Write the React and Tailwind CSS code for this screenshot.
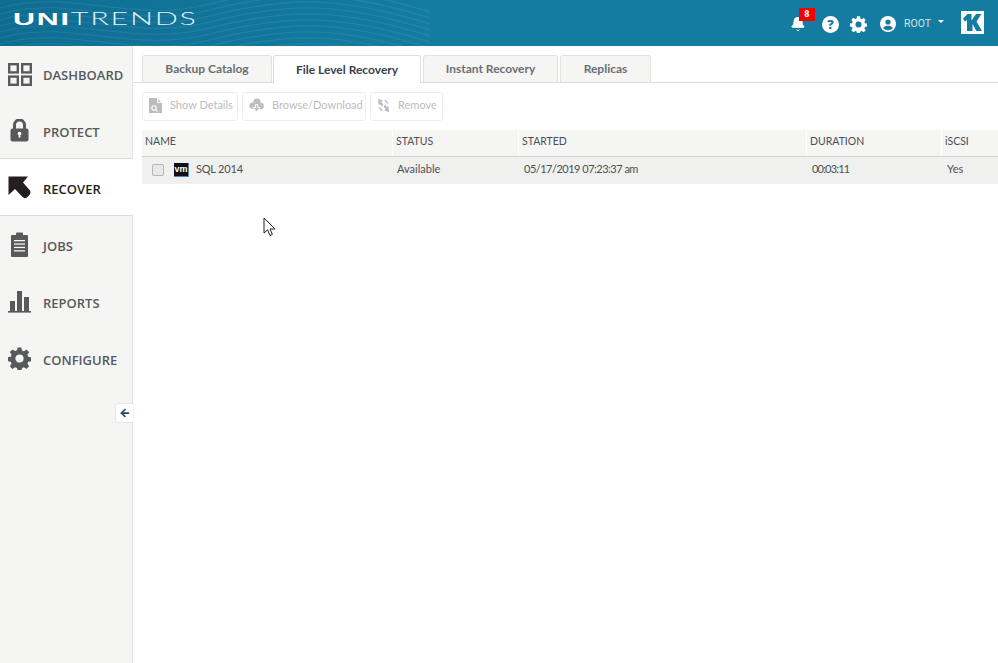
import { Bell, ArrowLeft } from 'lucide-react';

const NAV = [
  { label: 'DASHBOARD', icon: DashboardIcon, box: 'h-[57px]', text: 'pt-[2px]' },
  { label: 'PROTECT', icon: LockIcon, box: 'h-[55px]', text: 'pt-[4px]' },
  { label: 'RECOVER', icon: RecoverIcon, box: 'h-[58px]', text: 'pt-[6px]', active: true },
  { label: 'JOBS', icon: JobsIcon, box: 'h-[57px]', text: 'pt-[4px]' },
  { label: 'REPORTS', icon: ReportsIcon, box: 'h-[57px]', text: 'pt-[4px]' },
  { label: 'CONFIGURE', icon: SidebarGearIcon, box: 'h-[57px]', text: 'pt-[4px]' },
];

const TABS = [
  { label: 'Backup Catalog', width: 'w-[130px]' },
  { label: 'File Level Recovery', width: 'w-[148px]', active: true },
  { label: 'Instant Recovery', width: 'w-[135px]' },
  { label: 'Replicas', width: 'w-[91px]' },
];

const COLS = [
  { label: 'NAME', width: 'w-[251px]' },
  { label: 'STATUS', width: 'w-[126px]' },
  { label: 'STARTED', width: 'w-[288px]' },
  { label: 'DURATION', width: 'w-[135px]' },
  { label: 'iSCSI', width: 'flex-1' },
];

function DashboardIcon() {
  return (
    <svg width="24" height="23" viewBox="0 0 24 23" fill="none" stroke="#58595b" strokeWidth="2.4">
      <rect x="1.2" y="1.2" width="8.6" height="8.2" />
      <rect x="14.2" y="1.2" width="8.6" height="8.2" />
      <rect x="1.2" y="13.6" width="8.6" height="8.2" />
      <rect x="14.2" y="13.6" width="8.6" height="8.2" />
    </svg>
  );
}

function LockIcon() {
  return (
    <svg width="19" height="23" viewBox="0 0 19 23">
      <path d="M4.5 10V6a5 5 0 0 1 10 0V10" fill="none" stroke="#58595b" strokeWidth="3" />
      <rect x="0.5" y="9.5" width="18" height="13" rx="2" fill="#58595b" />
      <circle cx="9.5" cy="14.5" r="1.8" fill="#fff" />
      <rect x="8.6" y="15" width="1.8" height="3.6" fill="#fff" />
    </svg>
  );
}

function RecoverIcon() {
  return (
    <svg width="23" height="23" viewBox="0 0 23 23">
      <path d="M0.5 0.5H20L15 6.5L22 14.5C23 16 22.5 18 21 19.5L19.5 21C18 22.5 16 22.5 14.5 21L7 13L0.5 19Z" fill="#231f20" />
    </svg>
  );
}

function JobsIcon() {
  return (
    <svg width="17" height="25" viewBox="0 0 17 25">
      <rect x="0" y="3" width="17" height="22" rx="1" fill="#58595b" />
      <rect x="5" y="0.5" width="7" height="4.5" rx="1" fill="#58595b" />
      <rect x="3" y="8" width="11" height="1.3" fill="#f5f5f3" />
      <rect x="3" y="11.4" width="11" height="1.3" fill="#f5f5f3" />
      <rect x="3" y="14.8" width="11" height="1.3" fill="#f5f5f3" />
      <rect x="3" y="18.2" width="11" height="1.3" fill="#f5f5f3" />
    </svg>
  );
}

function ReportsIcon() {
  return (
    <svg width="23" height="23" viewBox="0 0 23 23" fill="#58595b">
      <rect x="2" y="11" width="5" height="10" />
      <rect x="9" y="1" width="5" height="20" />
      <rect x="16" y="7" width="5" height="14" />
      <rect x="0" y="21" width="23" height="1.6" />
    </svg>
  );
}

function GearIcon({ size, color }) {
  return (
    <svg width={size} height={size} viewBox="0 0 24 24" fill={color}>
      <path
        fillRule="evenodd"
        d="M10 0.5h4l.6 3.2 2 .8 2.7-1.8 2.8 2.8-1.8 2.7.8 2 3.2.6v4l-3.2.6-.8 2 1.8 2.7-2.8 2.8-2.7-1.8-2 .8-.6 3.2h-4l-.6-3.2-2-.8-2.7 1.8-2.8-2.8 1.8-2.7-.8-2-3.2-.6v-4l3.2-.6.8-2L1.9 5.3l2.8-2.8 2.7 1.8 2-.8zM12 7.7a4.3 4.3 0 1 0 0 8.6 4.3 4.3 0 0 0 0-8.6z"
      />
    </svg>
  );
}

function SidebarGearIcon() {
  return <GearIcon size={23} color="#58595b" />;
}

function DocSearchIcon() {
  return (
    <svg width="13" height="15" viewBox="0 0 13 15">
      <path d="M0 0h8l5 5v10H0z" fill="#bdbdbd" />
      <path d="M8.5 0.5v4h4" fill="none" stroke="#fff" strokeWidth="1" />
      <circle cx="5" cy="10" r="2.2" fill="none" stroke="#fff" strokeWidth="1.1" />
      <path d="M6.6 11.6l2 2" stroke="#fff" strokeWidth="1.1" />
    </svg>
  );
}

function CloudDownIcon() {
  return (
    <svg width="15" height="15" viewBox="0 0 15 15">
      <circle cx="8" cy="4" r="3.6" fill="#bdbdbd" />
      <circle cx="3.6" cy="7.6" r="3.2" fill="#bdbdbd" />
      <circle cx="11.6" cy="8" r="3.2" fill="#bdbdbd" />
      <rect x="3.5" y="6" width="8" height="5" fill="#bdbdbd" />
      <path d="M6.5 6.5h2.2v3H11L7.6 14 4.2 9.5h2.3z" fill="#bdbdbd" stroke="#fff" strokeWidth="0.9" />
    </svg>
  );
}

function RemoveIcon() {
  return (
    <svg width="13" height="15" viewBox="0 0 15 15" preserveAspectRatio="none">
      <path d="M1 1l5.5 1.2L5 4l2.5 2.5L5.5 8.5 3.5 6 2 7.5z" fill="#bdbdbd" />
      <path d="M14 14l-5.5-1.2L10 11 7.5 8.5l2-2 2 2.5L13 7.5z" fill="#bdbdbd" />
      <path d="M9 2l3.5 3.5M2.5 9.5L6 13" stroke="#bdbdbd" strokeWidth="1.6" />
    </svg>
  );
}

function UserIcon() {
  return (
    <svg width="16" height="16" viewBox="0 0 16 16">
      <circle cx="8" cy="8" r="8" fill="#fff" />
      <circle cx="8" cy="6" r="2.6" fill="#147ca1" />
      <path d="M3.2 12.2C4 10.4 6 9.8 8 9.8s4 .6 4.8 2.4C11.6 13.5 9.9 14.2 8 14.2s-3.6-.7-4.8-2z" fill="#147ca1" />
    </svg>
  );
}

function KaseyaLogo() {
  return (
    <div className="mb-[2px] flex h-[23px] w-[23px] items-center justify-center bg-white">
      <svg width="19" height="17" viewBox="0 0 19 17" fill="#147ca1">
        <path d="M0 4.5L4.5 0H8.5V6.5L13 0H18.5L13.5 7.5L19 17H13.5L9.5 10V17H4V6L1.8 7.5z" />
      </svg>
    </div>
  );
}

function HeaderWaves() {
  const lines = [];
  for (let i = 0; i < 12; i++) {
    const y = i * 6 - 10;
    lines.push(<path key={i} d={`M0 ${y + 18}C70 ${y - 2} 130 ${y + 34} 210 ${y + 14}S340 ${y - 6} 430 ${y + 22}`} />);
  }
  return (
    <svg className="absolute left-0 top-0" width="430" height="46" fill="none" stroke="#ffffff" strokeOpacity="0.08" strokeWidth="1.2">
      {lines}
    </svg>
  );
}

function NavItem({ label, icon: Icon, active, box, text }) {
  return (
    <div
      className={
        active
          ? `relative z-10 -mr-px flex ${box} items-center border-y border-[#dcdcda] bg-white`
          : `flex ${box} items-center`
      }
    >
      <div className="mr-[4px] flex w-[39px] shrink-0 justify-center">
        <Icon />
      </div>
      <span className={`text-[13px] font-semibold ${text} ${active ? 'text-[#231f20]' : 'text-[#58595b]'}`}>
        {label}
      </span>
    </div>
  );
}

function ToolButton({ icon: Icon, label, width }) {
  return (
    <div className={`flex h-[29px] items-center gap-[8px] rounded-[3px] border border-[#eeeeee] bg-white pb-[2px] pl-[6px] ${width}`}>
      <Icon />
      <span className="text-[11px] text-[#bdbdbd]">{label}</span>
    </div>
  );
}

export default function App() {
  return (
    <div className="relative flex h-[663px] w-[998px] flex-col overflow-hidden bg-white font-['Lato',sans-serif]">
      <header className="relative flex h-[46px] shrink-0 items-center justify-between bg-[#147ca1]">
        <div className="absolute left-0 top-0 h-[46px] w-[430px] bg-gradient-to-r from-[#0f6d92] to-[#147ca1]" />
        <HeaderWaves />
        <div className="relative mb-[9px] pl-[13px] font-['Liberation_Sans',sans-serif] text-[17px] leading-none tracking-[1px] text-[#e8f3f7]">
          <span className="inline-block origin-left scale-x-[1.79]">
            <span className="font-bold text-white">UNI</span>
            <span className="font-['Lato',sans-serif] font-light">TRENDS</span>
          </span>
        </div>
        <div className="relative flex items-center pr-[14px] text-white">
          <div className="flex items-center pt-[2px]">
            <div className="relative mr-[16px]">
              <Bell size={16} fill="currentColor" strokeWidth={1.5} />
              <span className="absolute left-[9px] top-[-8px] flex h-[13px] w-[16px] items-center justify-center bg-[#f30000] font-['Roboto',sans-serif] text-[9px] font-bold leading-none text-white">
                8
              </span>
            </div>
            <div className="mr-[11px] flex h-[17px] w-[17px] items-center justify-center rounded-full bg-white">
              <span className="font-['Open_Sans',sans-serif] text-[13px] font-extrabold leading-none text-[#147ca1]">?</span>
            </div>
            <div className="mr-[13px]">
              <GearIcon size={17} color="#ffffff" />
            </div>
            <div className="mr-[8px]">
              <UserIcon />
            </div>
            <span className="font-['Roboto',sans-serif] text-[10.5px] text-[#d5e6ed]">ROOT</span>
          </div>
          <span className="ml-[7px] mr-[17px] mt-[-3px] h-0 w-0 border-x-[3px] border-t-[3px] border-x-transparent border-t-white" />
          <KaseyaLogo />
        </div>
      </header>

      <div className="flex flex-1">
        <aside className="relative w-[133px] shrink-0 border-r border-[#e4e4e2] bg-[#f5f5f3] font-['Open_Sans',sans-serif]">
          <nav>
            {NAV.map((item) => (
              <NavItem key={item.label} {...item} />
            ))}
          </nav>
          <div className="absolute right-[-1px] top-[358px] flex h-[18px] w-[17px] items-center justify-center rounded-l-[2px] bg-white shadow-[0_0_2px_rgba(0,0,0,0.2)]">
            <ArrowLeft size={12} strokeWidth={3.5} className="text-[#1d4a6e]" />
          </div>
        </aside>

        <main className="flex-1 pt-[9px]">
          <div className="flex h-[28px] border-b border-[#dddddd] pl-[9px]">
            {TABS.map((t) => (
              <div
                key={t.label}
                className={
                  t.active
                    ? `ml-[1px] mr-[2px] flex h-[28px] ${t.width} items-center justify-center rounded-t-[3px] border border-b-0 border-[#dddddd] bg-white text-[12px] font-bold text-[#38424c]`
                    : `mr-[2px] flex h-[27px] last:mr-0 ${t.width} items-center justify-center rounded-t-[3px] border border-b-0 border-[#e2e2e2] bg-[#f5f5f3] text-[12px] font-bold text-[#6a6f75] first:mr-0`
                }
              >
                {t.label}
              </div>
            ))}
          </div>

          <div className="flex gap-[4px] pl-[9px] pt-[9px]">
            <ToolButton icon={DocSearchIcon} label="Show Details" width="w-[96px]" />
            <ToolButton icon={CloudDownIcon} label="Browse/Download" width="w-[124px]" />
            <ToolButton icon={RemoveIcon} label="Remove" width="w-[73px]" />
          </div>

          <div className="ml-[9px] mt-[9px] text-[#4b4f54]">
            <div className="flex h-[27px] border-b border-[#cfcfcd] bg-[#f5f5f3] text-[10.5px]">
              {COLS.map((c, i) => (
                <div key={c.label} className={`flex items-center pb-[3px] pl-[3px] ${c.width} ${i < COLS.length - 1 ? 'border-r border-white' : ''}`}>
                  {c.label}
                </div>
              ))}
            </div>
            <div className="flex h-[27px] items-center bg-[#f0f0ee] pb-[2px] text-[11px]">
              <div className="flex w-[251px] items-center pl-[10px]">
                <span className="h-[12px] w-[12px] rounded-[2px] border border-[#b5b5b5] bg-[#e8e8e8]" />
                <span className="ml-[10px] flex h-[14px] w-[15px] items-center justify-center border-b border-r border-[#4a86b0] bg-[#111111] font-['Liberation_Sans',sans-serif] text-[9px] font-bold leading-none text-white">
                  vm
                </span>
                <span className="ml-[7px] tracking-[-0.2px]">SQL 2014</span>
              </div>
              <div className="w-[126px] pl-[4px]">Available</div>
              <div className="w-[288px] pl-[5px] tracking-[-0.5px]">05/17/2019 07:23:37 am</div>
              <div className="w-[135px] pl-[5px] tracking-[-0.8px]">00:03:11</div>
              <div className="flex-1 pl-[5px]">Yes</div>
            </div>
          </div>
        </main>
      </div>

      <svg className="absolute left-[263px] top-[217px]" width="14" height="20" viewBox="0 0 14 20">
        <path d="M1 1v15l3.6-3.2L7 18.5l2.4-1-2.4-5.5h5z" fill="#fff" stroke="#222" strokeWidth="1" />
      </svg>
    </div>
  );
}
